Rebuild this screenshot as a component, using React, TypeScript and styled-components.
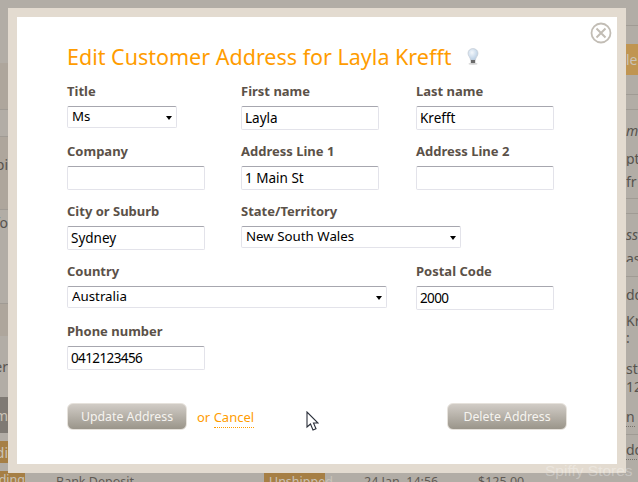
import styled, { createGlobalStyle } from 'styled-components';

const GlobalStyle = createGlobalStyle`
    html,
    body {
        margin: 0;
        padding: 0;
        background: #b2ada6;
    }
`;

const FONT = `'Noto Sans', 'Open Sans', sans-serif`;

const TONES: Record<string, string> = {
    light: '#b2ada6',
    brown: '#aea69c',
    dark: '#7f7a74',
    tan: '#a67f45',
    gold: '#c09552',
};

const Page = styled.div`
    position: relative;
    width: 638px;
    height: 482px;
    overflow: hidden;
    display: flex;
    font-family: ${FONT};
`;

const LeftStrip = styled.div`
    width: 8px;
    flex: none;
    display: flex;
    flex-direction: column;
    overflow: hidden;
`;

const RightStrip = styled.div`
    width: 12px;
    flex: none;
    display: flex;
    flex-direction: column;
    overflow: hidden;
`;

const Centre = styled.div`
    flex: 1;
    display: flex;
    flex-direction: column;
    justify-content: flex-end;
    min-width: 0;
`;

const Band = styled.div<{ $h: number; $tone?: string; $line?: boolean; $alignRight?: boolean }>`
    height: ${(p) => p.$h}px;
    flex: none;
    box-sizing: border-box;
    display: flex;
    align-items: center;
    justify-content: ${(p) => (p.$alignRight ? 'flex-end' : 'flex-start')};
    background: ${(p) => TONES[p.$tone || 'light']};
    border-bottom: ${(p) => (p.$line ? '1px solid #a09b94' : '0')};
    font-size: 14px;
    color: ${(p) => (p.$tone === 'tan' || p.$tone === 'gold' || p.$tone === 'dark' ? '#c9c3b8' : '#57534e')};
    white-space: nowrap;
`;

const BandText = styled.span<{ $dotted?: boolean; $italic?: boolean }>`
    border-bottom: ${(p) => (p.$dotted ? '1px dotted #77726b' : '0')};
    font-style: ${(p) => (p.$italic ? 'italic' : 'normal')};
`;

const BottomRow = styled.div`
    height: 9px;
    flex: none;
    display: flex;
    overflow: hidden;
    font-size: 12.5px;
    line-height: 18px;
    color: #5f5a54;
    white-space: nowrap;
`;

const BottomCorner = styled.div`
    position: absolute;
    left: 0;
    bottom: 0;
    width: 25px;
    height: 11px;
    background: ${TONES.tan};
    color: #c9c3b8;
    font-size: 12.5px;
    line-height: 18px;
    overflow: hidden;
    display: flex;
    justify-content: flex-end;
`;

const Cell = styled.div<{ $w: number; $chip?: boolean }>`
    width: ${(p) => p.$w}px;
    flex: none;
    box-sizing: border-box;
    padding-left: ${(p) => (p.$chip ? 5 : 0)}px;
    background: ${(p) => (p.$chip ? TONES.tan : 'transparent')};
    color: ${(p) => (p.$chip ? '#c9c3b8' : 'inherit')};
`;

const Modal = styled.div`
    position: absolute;
    left: 8px;
    top: 8px;
    width: 600px;
    height: 447px;
    border: 9px solid #e3dbd0;
    background: #fff;
    box-sizing: content-box;
`;

const ModalBody = styled.div`
    padding: 24px 50px 0;
    display: flex;
    flex-direction: column;
`;

const Heading = styled.h1`
    margin: 0 0 11px;
    height: 30px;
    display: flex;
    align-items: center;
    gap: 16px;
    font-size: 21.5px;
    font-weight: 400;
    color: #ff9c00;
    white-space: nowrap;
`;

const CloseButton = styled.button`
    position: absolute;
    right: 5px;
    top: 5px;
    width: 22px;
    height: 22px;
    padding: 0;
    border: 0;
    background: none;
    display: block;
`;

const FormGrid = styled.form`
    display: grid;
    grid-template-columns: 174px 175px 138px;
    grid-auto-rows: 60px;
`;

const Field = styled.div<{ $span?: number }>`
    grid-column: span ${(p) => p.$span || 1};
    display: flex;
    flex-direction: column;
    align-items: flex-start;
`;

const Label = styled.label`
    height: 24px;
    font-size: 13px;
    line-height: 18px;
    font-weight: 700;
    color: #5b5148;
`;

const TextInput = styled.input<{ $numeric?: boolean }>`
    box-sizing: border-box;
    width: 138px;
    height: 24px;
    padding: 2px 3px;
    border: 1px solid #e3e3ea;
    border-top-color: #a7a7af;
    border-radius: 2px;
    background: #fff;
    font-family: ${FONT};
    font-size: 13.5px;
    letter-spacing: ${(p) => (p.$numeric ? '-0.6px' : '0')};
    color: #000;
    outline: none;
`;

const SelectWrap = styled.div<{ $w: number }>`
    position: relative;
    width: ${(p) => p.$w}px;
    height: 22px;

    &::after {
        content: '';
        position: absolute;
        right: 5px;
        top: 10px;
        border-left: 3.5px solid transparent;
        border-right: 3.5px solid transparent;
        border-top: 4.5px solid #000;
    }
`;

const Select = styled.select`
    appearance: none;
    display: block;
    box-sizing: border-box;
    width: 100%;
    height: 22px;
    padding: 0 4px 2px;
    border: 1px solid #e3e3ea;
    border-top-color: #a7a7af;
    border-radius: 2px;
    background: #fff;
    font-family: ${FONT};
    font-size: 13.3px;
    color: #000;
    outline: none;
`;

const Actions = styled.div`
    margin-top: 21px;
    display: flex;
    align-items: center;
`;

const ActionButton = styled.button<{ $push?: boolean }>`
    box-sizing: border-box;
    width: 120px;
    height: 27px;
    margin-left: ${(p) => (p.$push ? 'auto' : '0')};
    border: 1px solid #e6e2dc;
    border-radius: 6px;
    background: linear-gradient(#d1ccc6, #9a958a);
    font-family: ${FONT};
    font-size: 12.3px;
    color: #f6f4f0;
`;

const CancelText = styled.span`
    margin-left: 10px;
    font-size: 13px;
    color: #ff9c00;
`;

const CancelLink = styled.a`
    border-bottom: 1px dotted #ff9c00;
    padding-bottom: 1px;
    color: #ff9c00;
`;

const Pointer = styled.svg`
    position: absolute;
    left: 306px;
    top: 411px;
`;

const Watermark = styled.div`
    position: absolute;
    left: 545px;
    top: 461px;
    font-family: 'Liberation Sans', Arial, sans-serif;
    font-size: 15.5px;
    line-height: 20px;
    color: rgba(255, 255, 255, 0.3);
    white-space: nowrap;
`;

function BulbIcon() {
    return (
        <svg width="12" height="17" viewBox="0 0 12 17">
            <defs>
                <radialGradient id="glass" cx="0.4" cy="0.35" r="0.7">
                    <stop offset="0" stopColor="#f4f8fc" />
                    <stop offset="1" stopColor="#b4cbe2" />
                </radialGradient>
            </defs>
            <path
                d="M6 .6C2.9.6 1 2.8 1 5.3c0 2.6 2.2 3.9 2.6 6.7h4.8C8.800 9.200 11 7.900 11 5.300 11 2.800 9.100.6 6 .6z"
                fill="url(#glass)"
                stroke="#c6ccd4"
                strokeWidth="0.7"
            />
            <rect x="3.800" y="12" width="4.400" height="3.200" fill="#6a6a6a" />
            <ellipse cx="6" cy="15.800" rx="4.500" ry="0.900" fill="#cfcfcf" />
        </svg>
    );
}

function CloseIcon() {
    return (
        <svg width="22" height="22" viewBox="0 0 22 22" fill="none" stroke="#c2bdb5">
            <circle cx="11" cy="11" r="9.500" strokeWidth="1.800" />
            <path d="M6.500 6.500l9 9M15.500 6.500l-9 9" strokeWidth="2" />
        </svg>
    );
}

function TextField({ label, value = '', numeric }: { label: string; value?: string; numeric?: boolean }) {
    return (
        <Field>
            <Label>{label}</Label>
            <TextInput defaultValue={value} $numeric={numeric} />
        </Field>
    );
}

function SelectField({ label, value, width, span }: { label: string; value: string; width: number; span?: number }) {
    return (
        <Field $span={span}>
            <Label>{label}</Label>
            <SelectWrap $w={width}>
                <Select defaultValue={value}>
                    <option>{value}</option>
                </Select>
            </SelectWrap>
        </Field>
    );
}

export default function App() {
    return (
        <Page>
            <GlobalStyle />

            <LeftStrip>
                <Band $h={63} />
                <Band $h={47} $tone="brown" $line />
                <Band $h={27} $line />
                <Band $h={54} $tone="brown" $alignRight>
                    <BandText>pi</BandText>
                </Band>
                <Band $h={19} $tone="brown" $line />
                <Band $h={24} $alignRight>
                    <BandText>fo</BandText>
                </Band>
                <Band $h={70} $line />
                <Band $h={32} $tone="brown" />
                <Band $h={61} $alignRight>
                    <BandText>er</BandText>
                </Band>
                <Band $h={36} $tone="dark" $alignRight>
                    <BandText>m</BandText>
                </Band>
                <Band $h={8} />
                <Band $h={22} $tone="tan" $alignRight>
                    <BandText>di</BandText>
                </Band>
                <Band $h={19} />
            </LeftStrip>

            <Centre>
                <BottomRow>
                    <Cell $w={48} />
                    <Cell $w={208}>Bank Deposit</Cell>
                    <Cell $w={61} $chip>
                        Unshipped
                    </Cell>
                    <Cell $w={39} />
                    <Cell $w={114}>24 Jan, 14:56</Cell>
                    <Cell $w={148}>$125.00</Cell>
                </BottomRow>
            </Centre>

            <RightStrip>
                <Band $h={26} $line />
                <Band $h={18} />
                <Band $h={31} $tone="gold">
                    <BandText>le</BandText>
                </Band>
                <Band $h={20} $line />
                <Band $h={15} $line />
                <Band $h={40}>
                    <BandText $italic>m</BandText>
                </Band>
                <Band $h={16}>
                    <BandText>pts</BandText>
                </Band>
                <Band $h={30}>
                    <BandText>fr</BandText>
                </Band>
                <Band $h={3} $line />
                <Band $h={15} $line />
                <Band $h={40}>
                    <BandText $italic>ss</BandText>
                </Band>
                <Band $h={8}>
                    <BandText>as</BandText>
                </Band>
                <Band $h={15} $line />
                <Band $h={34}>
                    <BandText>dd</BandText>
                </Band>
                <Band $h={18}>
                    <BandText>Kr</BandText>
                </Band>
                <Band $h={16}>
                    <BandText>:</BandText>
                </Band>
                <Band $h={14} />
                <Band $h={18}>
                    <BandText>str</BandText>
                </Band>
                <Band $h={18}>
                    <BandText>123</BandText>
                </Band>
                <Band $h={10} />
                <Band $h={24}>
                    <BandText $dotted>n</BandText>
                </Band>
                <Band $h={6} $line />
                <Band $h={30}>
                    <BandText $dotted>dd</BandText>
                </Band>
                <Band $h={17} />
            </RightStrip>

            <BottomCorner>ding</BottomCorner>

            <Modal>
                <CloseButton aria-label="Close">
                    <CloseIcon />
                </CloseButton>
                <ModalBody>
                    <Heading>
                        Edit Customer Address for Layla Krefft
                        <BulbIcon />
                    </Heading>
                    <FormGrid>
                        <SelectField label="Title" value="Ms" width={110} />
                        <TextField label="First name" value="Layla" />
                        <TextField label="Last name" value="Krefft" />
                        <TextField label="Company" />
                        <TextField label="Address Line 1" value="1 Main St" />
                        <TextField label="Address Line 2" />
                        <TextField label="City or Suburb" value="Sydney" />
                        <SelectField label="State/Territory" value="New South Wales" width={220} span={2} />
                        <SelectField label="Country" value="Australia" width={320} span={2} />
                        <TextField label="Postal Code" value="2000" numeric />
                        <TextField label="Phone number" value="0412123456" numeric />
                    </FormGrid>
                    <Actions>
                        <ActionButton type="button">Update Address</ActionButton>
                        <CancelText>
                            or <CancelLink>Cancel</CancelLink>
                        </CancelText>
                        <ActionButton type="button" $push>
                            Delete Address
                        </ActionButton>
                    </Actions>
                </ModalBody>
            </Modal>

            <Pointer width="13" height="21" viewBox="0 0 13 21">
                <path d="M1 1v15l3.500-3 2.500 6 3-1.300-2.500-5.700H12z" fill="#fff" stroke="#2a2f3a" strokeWidth="1.100" />
            </Pointer>

            <Watermark>Spiffy Stores</Watermark>
        </Page>
    );
}
